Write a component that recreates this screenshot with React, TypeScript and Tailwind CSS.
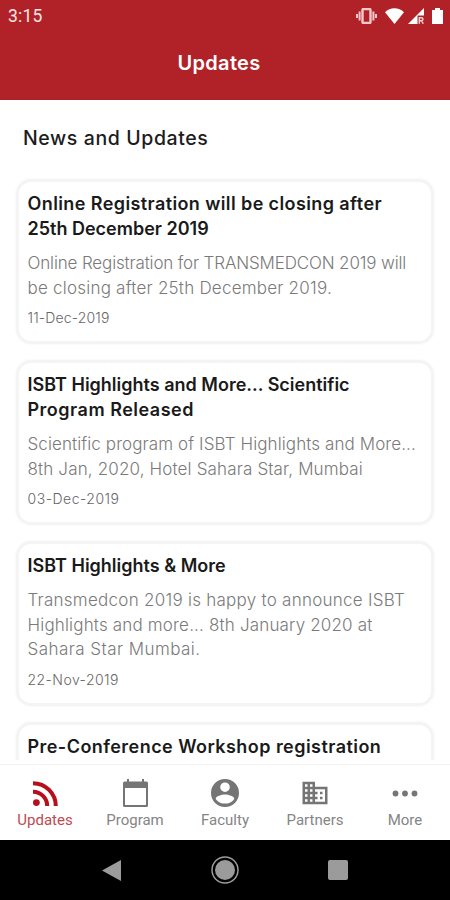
import React from "react";
import { MdDomain } from "react-icons/md";

type Line = { text: string; className: string };
type NewsItem = { title: Line[]; body: Line[]; date: Line };

const news: NewsItem[] = [
  {
    title: [
      { text: "Online Registration will be closing after", className: "tracking-[0.4px]" },
      { text: "25th December 2019", className: "" },
    ],
    body: [
      { text: "Online Registration for TRANSMEDCON 2019 will", className: "tracking-[-0.15px]" },
      { text: "be closing after 25th December 2019.", className: "tracking-[0.22px]" },
    ],
    date: { text: "11-Dec-2019", className: "tracking-[0.15px]" },
  },
  {
    title: [
      { text: "ISBT Highlights and More... Scientific", className: "" },
      { text: "Program Released", className: "tracking-[0.5px]" },
    ],
    body: [
      { text: "Scientific program of ISBT Highlights and More...", className: "tracking-[0.1px]" },
      { text: "8th Jan, 2020, Hotel Sahara Star, Mumbai", className: "tracking-[0.15px]" },
    ],
    date: { text: "03-Dec-2019", className: "tracking-[0.5px]" },
  },
  {
    title: [{ text: "ISBT Highlights & More", className: "" }],
    body: [
      { text: "Transmedcon 2019 is happy to announce ISBT", className: "tracking-[0.26px]" },
      { text: "Highlights and more... 8th January 2020 at", className: "tracking-[0.17px]" },
      { text: "Sahara Star Mumbai.", className: "tracking-[0.45px]" },
    ],
    date: { text: "22-Nov-2019", className: "tracking-[0.45px]" },
  },
  {
    title: [{ text: "Pre-Conference Workshop registration", className: "tracking-[0.45px]" }],
    body: [],
    date: { text: "", className: "" },
  },
];

export default function App() {
  return (
    <div className="flex h-[900px] w-[450px] flex-col overflow-hidden bg-white font-['Inter',sans-serif]">
      <header className="h-[100px] shrink-0 bg-[#b12228] text-white">
        <StatusBar />
        <h1 className="mt-[17px] -ml-[12px] text-center text-[20px] leading-7 font-semibold tracking-[0.3px]">Updates</h1>
      </header>
      <main className="flex h-[660px] shrink-0 flex-col overflow-hidden px-4">
        <h2 className="mt-6 ml-[7px] text-[19.5px] leading-7 font-medium tracking-[0.6px] text-[#1c1c1c]">News and Updates</h2>
        <div className="mt-[27px] flex flex-col gap-[16px]">
          {news.map((item, i) => (
            <NewsCard key={i} item={item} />
          ))}
        </div>
      </main>
      <TabBar />
      <SystemNav />
    </div>
  );
}

function StatusBar() {
  return (
    <div className="flex h-8 items-center justify-between pr-[7px] pl-2">
      <span className="font-['Roboto',sans-serif] text-[17.5px] tracking-[0.2px] text-[#fbe6e6]">3:15</span>
      <div className="flex items-center">
        <svg className="mr-2 h-4 w-[21px]" viewBox="0 0 21 16" fill="none" stroke="#f6c9ca" strokeWidth="2">
          <rect x="6.5" y="1" width="8" height="14" rx="1" strokeWidth="2.4" />
          <path d="M3.6 3.5v9M1 6v4M17.4 3.5v9M20 6v4" />
        </svg>
        <svg className="mr-1 h-4 w-[19px]" viewBox="0 0 19 16" fill="#fff">
          <path d="M9.5 16L0 4.2C2.6 1.5 6 .2 9.5 .2s6.9 1.3 9.5 4z" />
        </svg>
        <svg className="mr-2 h-4 w-4" viewBox="0 0 16 16" fill="none">
          <path d="M0 16L16 0v7.5H9.5V16z" fill="#fff" />
          <path d="M11.3 15.7V9.8h2c2.3 0 2.3 2.9 0 2.9h-2m2 0l2 3" stroke="#f6d5d5" strokeWidth="1.4" />
        </svg>
        <svg className="h-4 w-[11px]" viewBox="0 0 11 16" fill="#fff">
          <path d="M3 0h5v2h3v14H0V2h3z" />
        </svg>
      </div>
    </div>
  );
}

function NewsCard({ item }: { item: NewsItem }) {
  return (
    <article className="h-[165px] shrink-0 rounded-[15px] border-[3px] border-[#f4f4f4] px-[8.5px] pt-[9px] shadow-[0_0_3px_#f3f3f3]">
      <h3 className="text-[18px] leading-[25px] font-semibold text-[#1a1a1a]">
        {item.title.map((line) => (
          <span key={line.text} className={`block whitespace-nowrap ${line.className}`}>{line.text}</span>
        ))}
      </h3>
      <p className="mt-[10px] text-[17px] leading-[24.5px] font-light text-[#7a7a7a]">
        {item.body.map((line) => (
          <span key={line.text} className={`block whitespace-nowrap ${line.className}`}>{line.text}</span>
        ))}
      </p>
      <time className={`mt-[8px] block text-[14px] leading-5 font-light text-[#666] ${item.date.className}`}>{item.date.text}</time>
    </article>
  );
}

const tabs = [
  { label: "Updates", icon: <RssIcon /> },
  { label: "Program", icon: <CalendarIcon /> },
  { label: "Faculty", icon: <PersonIcon /> },
  { label: "Partners", icon: <MdDomain size={30} /> },
  { label: "More", icon: <MoreIcon /> },
];

function TabBar() {
  return (
    <nav className="mt-1 flex h-[76px] shrink-0 border-t border-[#f2f2f2] bg-white pt-[13px] font-['Roboto',sans-serif]">
      {tabs.map((tab, i) => (
        <button key={tab.label} type="button" className={`flex flex-1 flex-col items-center ${i === 0 ? "text-[#b5101c]" : "text-[#757575]"}`}>
          <span className="flex h-[30px] items-center">{tab.icon}</span>
          <span className={`mt-[2px] text-[15px] leading-5 ${i === 0 ? "text-[#bd4a52]" : "text-[#858585]"}`}>{tab.label}</span>
        </button>
      ))}
    </nav>
  );
}

function RssIcon() {
  return (
    <svg width="25" height="25" viewBox="0 0 25 25" fill="none" stroke="currentColor" strokeWidth="4">
      <circle cx="3.4" cy="21.6" r="3.4" fill="currentColor" stroke="none" />
      <path d="M0 10.8a14.2 14.2 0 0 1 14.2 14.2M0 2.2a22.8 22.8 0 0 1 22.8 22.8" />
    </svg>
  );
}

function CalendarIcon() {
  return (
    <svg width="25" height="28" viewBox="0 0 25 28" fill="currentColor">
      <path d="M4 0h2v2.5h13V0h2v2.5h2.5Q25 2.5 25 4v22.5Q25 28 23.5 28h-22Q0 28 0 26.5V4Q0 2.5 1.5 2.5H4zM2 9v17h21V9z" fillRule="evenodd" />
    </svg>
  );
}

function PersonIcon() {
  return (
    <svg width="28" height="28" viewBox="0 0 28 28" fill="currentColor">
      <path
        d="M14 0a14 14 0 1 1 0 28a14 14 0 1 1 0-28zM14 3.4a4.8 4.8 0 1 0 0 9.6a4.8 4.8 0 1 0 0-9.6zM14 15.6c-3.3 0-9.3 1.6-9.3 4.3 2 3 5.5 4.7 9.3 4.7s7.3-1.7 9.3-4.7c0-2.7-6-4.3-9.3-4.3z"
        fillRule="evenodd"
      />
    </svg>
  );
}

function MoreIcon() {
  return (
    <svg width="26" height="7" viewBox="0 0 26 7" fill="currentColor">
      <circle cx="3.5" cy="3.5" r="2.9" />
      <circle cx="13" cy="3.5" r="2.9" />
      <circle cx="22.5" cy="3.5" r="2.9" />
    </svg>
  );
}

function SystemNav() {
  return (
    <div className="flex h-[60px] shrink-0 items-center bg-black pl-[102px]">
      <svg className="h-[21px] w-[19px]" viewBox="0 0 19 21" fill="#9b9b9b">
        <path d="M0 10.5L19 0v21z" />
      </svg>
      <svg className="ml-[90px] h-7 w-7" viewBox="0 0 28 28" fill="none">
        <circle cx="14" cy="14" r="13" stroke="#9b9b9b" strokeWidth="1.5" />
        <circle cx="14" cy="14" r="10" fill="#9b9b9b" />
      </svg>
      <div className="ml-[89px] h-5 w-5 rounded-[2px] bg-[#9b9b9b]" />
    </div>
  );
}
